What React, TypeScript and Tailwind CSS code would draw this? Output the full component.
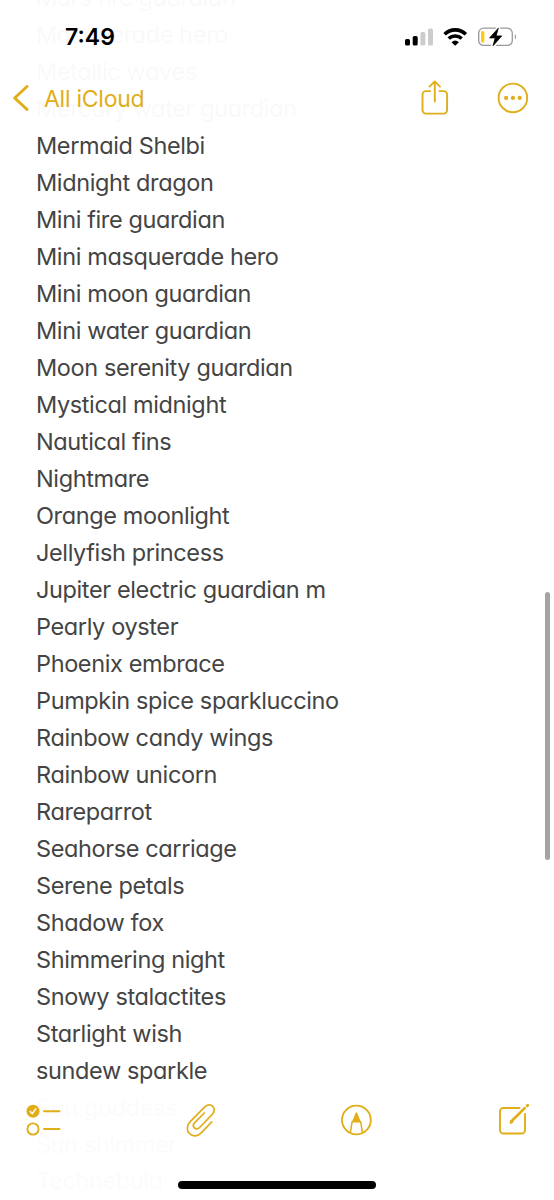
const notes: string[] = [
  'Mars fire guardian',
  'Masquerade hero',
  'Metallic waves',
  'Mercury water guardian',
  'Mermaid Shelbi',
  'Midnight dragon',
  'Mini fire guardian',
  'Mini masquerade hero',
  'Mini moon guardian',
  'Mini water guardian',
  'Moon serenity guardian',
  'Mystical midnight',
  'Nautical fins',
  'Nightmare',
  'Orange moonlight',
  'Jellyfish princess',
  'Jupiter electric guardian m',
  'Pearly oyster',
  'Phoenix embrace',
  'Pumpkin spice sparkluccino',
  'Rainbow candy wings',
  'Rainbow unicorn',
  'Rareparrot',
  'Seahorse carriage',
  'Serene petals',
  'Shadow fox',
  'Shimmering night',
  'Snowy stalactites',
  'Starlight wish',
  'sundew sparkle',
  'Sun goddess',
  'Sun shimmer',
  'Technebula',
];

function StatusIcons() {
  return (
    <svg width="114" height="24" viewBox="402 25 114 24" fill="none">
      <rect x="405" y="39" width="5" height="6.5" rx="1.6" fill="#000" />
      <rect x="412.7" y="36" width="5" height="9.5" rx="1.6" fill="#000" />
      <rect x="420.4" y="32" width="5" height="13.5" rx="1.6" fill="#ccc" />
      <rect x="428" y="28.5" width="5" height="17" rx="1.6" fill="#ccc" />
      <path d="M444.6 34.2a15.2 15.2 0 0 1 21.2 0" stroke="#000" strokeWidth="3.6" />
      <path d="M448.7 38.6a9.4 9.4 0 0 1 13 0" stroke="#000" strokeWidth="3.5" />
      <path d="M451.5 42.2a5.6 5.6 0 0 1 7.4 0l-3.7 3.5z" fill="#000" />
      <rect x="478.7" y="28.2" width="33.6" height="17.2" rx="5" stroke="#999" strokeWidth="1.3" />
      <path d="M514.8 34v5.6c1.6-.8 1.6-4.8 0-5.6z" fill="#999" />
      <rect x="481" y="31" width="3.4" height="11.6" rx="1.5" fill="#fccb12" />
      <path d="M498.8 27.5 489.3 38.2h5.4l-2.1 8.3 9.500-10.900h-5.700z" fill="#000" stroke="#fff" strokeWidth="3.5" />
      <path d="M498.300 28.200 489.600 37.900h5.600l-2.100 7.800 8.600-9.800h-5.600z" fill="#000" stroke="#000" strokeWidth=".8" strokeLinejoin="round" />
    </svg>
  );
}

function ShareIcon() {
  return (
    <svg width="32" height="40" viewBox="419 78 32 40" fill="none" stroke="#dfae18" strokeWidth="1.9" strokeLinecap="round" strokeLinejoin="round">
      <path d="M430.200 91.100h-4.200a3.500 3.500 0 0 0-3.500 3.500v15.500a3.500 3.500 0 0 0 3.500 3.500h17.600a3.500 3.500 0 0 0 3.500-3.500v-15.500a3.500 3.500 0 0 0-3.500-3.500h-4.200M434.800 101.500V81.500M429.600 86.600l5.200-5.200 5.200 5.200" />
    </svg>
  );
}

function MoreIcon() {
  return (
    <svg width="36" height="40" viewBox="495 78 36 40" fill="#dfae18">
      <circle cx="512.9" cy="97.9" r="14.3" fill="none" stroke="#dfae18" strokeWidth="1.9" />
      <circle cx="506.1" cy="97.9" r="2.1" />
      <circle cx="512.9" cy="97.9" r="2.1" />
      <circle cx="519.7" cy="97.9" r="2.1" />
    </svg>
  );
}

function ChecklistIcon() {
  return (
    <svg width="40" height="40" viewBox="24 1100 40 40" fill="none" stroke="#dfae18" strokeWidth="1.9" strokeLinecap="round" strokeLinejoin="round">
      <circle cx="33" cy="1111.200" r="6.500" fill="#dfae18" stroke="none" />
      <path d="m30.300 1111.500 2 2.200 3.400-4.900" stroke="#fff" strokeWidth="1.4" />
      <circle cx="33" cy="1129" r="5.600" />
      <path d="M44 1111.200h15.500M44 1129h15.500" />
    </svg>
  );
}

function ClipIcon() {
  return (
    <svg width="40" height="40" viewBox="181.500 1100 40 40" fill="none" stroke="#dfae18" strokeWidth="1.7" strokeLinecap="round" strokeLinejoin="round">
      <path d="M212.300 1121.800l-10.600 11.100c-3.400 3.600-8.400 3.900-11.600.8s-3-8.300.4-11.800l14.800-15c2.400-2.500 5.700-2.700 7.900-.5s2 5.500-.4 7.900l-12.700 13.200c-1.600 1.700-3.800 1.800-5.200.4s-1.300-3.600.3-5.200l9.600-9.700" />
    </svg>
  );
}

function MarkupIcon() {
  return (
    <svg width="40" height="40" viewBox="337 1100 40 40" fill="none" stroke="#dfae18" strokeWidth="1.9" strokeLinejoin="round">
      <circle cx="356.400" cy="1120" r="14.400" />
      <path d="M350.300 1132.800l1.800-11h8.600l1.800 11" strokeWidth="1.5" />
      <path d="M351.900 1122l3.800-9.300q.7-1.100 1.400 0l3.800 9.300z" fill="#dfae18" stroke="none" />
    </svg>
  );
}

function ComposeIcon() {
  return (
    <svg width="40" height="40" viewBox="494 1100 40 40" fill="none" stroke="#dfae18" strokeWidth="1.9" strokeLinecap="round" strokeLinejoin="round">
      <path d="M519.500 1108h-16a3.500 3.500 0 0 0-3.500 3.500v18.500a3.500 3.500 0 0 0 3.500 3.500h18a3.500 3.500 0 0 0 3.500-3.500v-16" />
      <path d="M511 1121.800l13.700-13.700" strokeWidth="2.700" />
      <path d="M510.200 1123.200l1-2.700 1.600 1.600z" strokeWidth="1" fill="#dfae18" />
      <path d="M527.200 1105.800l.4-.4" strokeWidth="3" />
    </svg>
  );
}

export default function App() {
  return (
    <div className="relative h-[1200px] w-[554px] overflow-hidden bg-white font-['Inter',sans-serif]">
      <ul className="-mt-[20.4px] pl-[36px] text-[23.5px] tracking-[-0.38px] text-[#444] [font-feature-settings:'cv11']">
        {notes.map((note) => (
          <li key={note} className="flex h-[36.98px] items-center whitespace-nowrap">
            {note}
          </li>
        ))}
      </ul>

      <header className="absolute inset-x-0 top-0 h-[127px] bg-white/97">
        <div className="flex h-[73px] items-center justify-between pr-[38px] pl-[65px]">
          <span className="text-[23px] leading-6 font-semibold text-black">7:49</span>
          <StatusIcons />
        </div>
        <div className="flex h-[50px] items-center justify-between pr-[23px] pl-[12px]">
          <div className="flex items-center gap-[14px] text-[#dfae18]">
            <svg width="18" height="30" viewBox="12 83 18 30" fill="none" stroke="#dfae18" strokeWidth="3" strokeLinecap="round" strokeLinejoin="round">
              <path d="M27 86.500 14.700 98l12.300 11.500" />
            </svg>
            <span className="pt-px text-[23px] leading-7 tracking-[-0.25px]">All iCloud</span>
          </div>
          <div className="flex gap-[44px]">
            <ShareIcon />
            <MoreIcon />
          </div>
        </div>
      </header>

      <footer className="absolute inset-x-0 bottom-0 h-[111px] bg-white/98 pt-[11px]">
        <div className="flex items-center justify-between pr-[20px] pl-[24px]">
          <ChecklistIcon />
          <ClipIcon />
          <MarkupIcon />
          <ComposeIcon />
        </div>
        <div className="mx-auto mt-[41px] h-[8px] w-[198px] rounded-full bg-black" />
      </footer>

      <div className="absolute top-[592px] right-[4px] h-[268px] w-[5px] rounded-full bg-[#a4a4a4]" />
    </div>
  );
}
